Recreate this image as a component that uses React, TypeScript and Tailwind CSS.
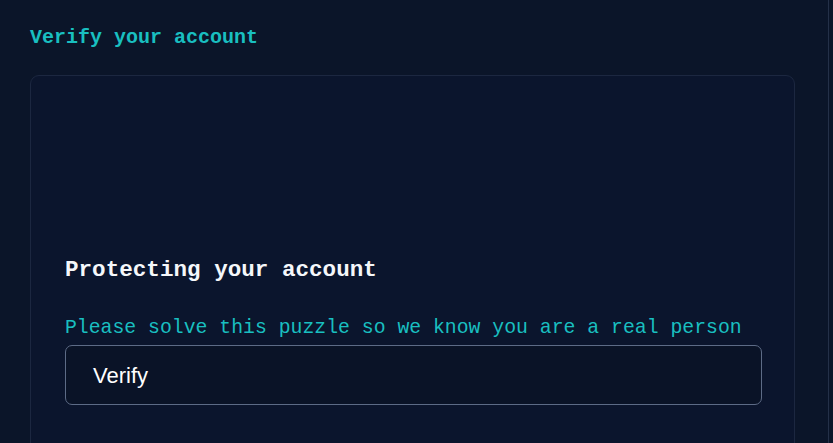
import React from "react";

export default function App() {
  return (
    <div className="relative h-[443px] w-[833px] overflow-hidden bg-[#0b1529]">
      <div className="absolute right-[4px] top-0 h-full w-px bg-[#243048]" />
      <div className="px-[30px] pt-[24px]">
        <h1
          className="text-[20px] font-bold leading-[28px] text-[#19bfc0]"
          style={{ fontFamily: '"Liberation Mono", monospace' }}
        >
          Verify your account
        </h1>
        <div className="mt-[23px] h-[400px] w-[765px] rounded-[9px] border border-[#1c2740] bg-[#0b152d] pl-[34px] pr-[32px] pt-[179px]">
          <h2
            className="text-[22.6px] font-bold leading-[30px] text-[#f5f7fa]"
            style={{ fontFamily: '"Liberation Mono", monospace' }}
          >
            Protecting your account
          </h2>
          <p
            className="mt-[29px] text-[19.8px] leading-[28px] text-[#19bfc0]"
            style={{ fontFamily: '"Liberation Mono", monospace' }}
          >
            Please solve this puzzle so we know you are a real person
          </p>
          <div className="mt-[3px] flex h-[60px] items-center rounded-[7px] border border-[#5d6b86] bg-[#0a1327] pl-[27px]">
            <span
              className="text-[22px] text-white"
              style={{ fontFamily: '"Liberation Sans", Arial, sans-serif' }}
            >
              Verify
            </span>
          </div>
        </div>
      </div>
    </div>
  );
}
